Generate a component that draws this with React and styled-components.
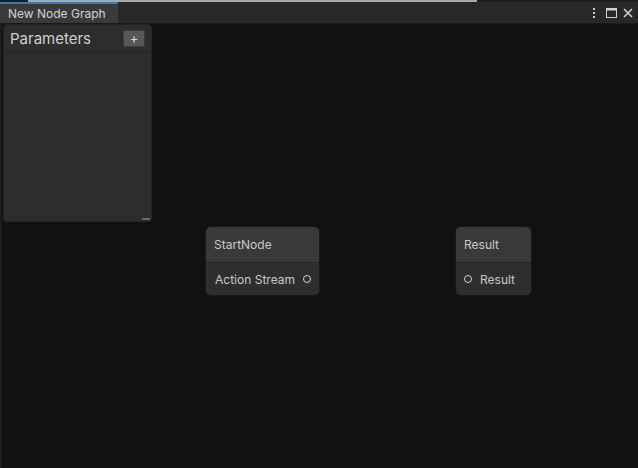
import React from "react";
import styled, { createGlobalStyle } from "styled-components";

const Global = createGlobalStyle`
  html, body { margin: 0; padding: 0; background: #111111; }
  body { font-family: Inter, "Noto Sans", "Liberation Sans", sans-serif; }
  #root { width: 638px; height: 468px; overflow: hidden; }
`;

const Window = styled.div`
  width: 638px;
  height: 468px;
  display: flex;
  flex-direction: column;
  background: #111111;
`;

const TopLine = styled.div`
  height: 2px;
  display: flex;
  background: #1c1c1c;
`;

const TopLineLight = styled.div`
  margin-left: 28px;
  width: 449px;
  background: #a9a9a9;
`;

const TabBar = styled.div`
  height: 21px;
  display: flex;
  align-items: stretch;
  justify-content: space-between;
  background: #282828;
  border-bottom: 1px solid #1a1a1a;
`;

const Tab = styled.div`
  width: 118px;
  box-sizing: border-box;
  border-top: 2px solid #3a79bb;
  background: #3a3a3a;
  color: #d2d2d2;
  font-size: 12px;
  line-height: 19px;
  padding-left: 8px;
`;

const Controls = styled.div`
  display: flex;
  align-items: center;
  gap: 6px;
  padding-right: 5px;
`;

const KebabWrap = styled.span`
  display: flex;
  margin-right: 4px;
`;

const Canvas = styled.div`
  position: relative;
  flex: 1;
  background: #111111;
  border-left: 2px solid #1d1d1d;
`;

const Panel = styled.div`
  position: absolute;
  left: 1px;
  top: 0px;
  width: 149px;
  height: 198px;
  background: #2d2d2d;
  border: 1px solid #232323;
  border-radius: 4px;
  box-sizing: border-box;
  display: flex;
  flex-direction: column;
`;

const PanelHeader = styled.div`
  height: 26px;
  display: flex;
  align-items: center;
  justify-content: space-between;
  padding: 0 6px 1px 6px;
  border-bottom: 1px solid #232323;
`;

const PanelTitle = styled.span`
  color: #cfcfcf;
  font-size: 15px;
`;

const AddButton = styled.div`
  width: 22px;
  height: 17px;
  box-sizing: border-box;
  background: #585858;
  border: 1px solid #3c3c3c;
  border-radius: 2px;
  color: #d8d8d8;
  font-size: 13px;
  line-height: 14px;
  text-align: center;
`;

const ResizeGrip = styled.div`
  position: absolute;
  right: 1px;
  bottom: 1px;
  width: 8px;
  height: 2px;
  background: #6b6b6b;
`;

const Node = styled.div`
  position: absolute;
  left: ${(p) => p.$x}px;
  top: ${(p) => p.$y}px;
  width: ${(p) => p.$w}px;
  border-radius: 5px;
  overflow: hidden;
  background: #2e2e2e;
  box-shadow: 0 0 0 1px #191919;
`;

const NodeHeader = styled.div`
  height: 36px;
  display: flex;
  align-items: center;
  padding: 0 0 1px 8px;
  box-sizing: border-box;
  background: #393939;
  border-bottom: 1px solid #262626;
  color: #c9c9c9;
  font-size: 12px;
`;

const NodeBody = styled.div`
  height: 32px;
  display: flex;
  align-items: center;
  justify-content: ${(p) => (p.$output ? "flex-end" : "flex-start")};
  gap: 8px;
  padding: 0 8px;
  color: #c9c9c9;
  font-size: 12px;
`;

const Port = styled.span`
  width: 6px;
  height: 6px;
  border: 1px solid #d0d0d0;
  border-radius: 50%;
  box-sizing: content-box;
`;

function Kebab() {
  return (
    <svg width="4" height="12" viewBox="0 0 4 12">
      <rect x="1" y="1" width="2" height="2" fill="#c8c8c8" />
      <rect x="1" y="5" width="2" height="2" fill="#c8c8c8" />
      <rect x="1" y="9" width="2" height="2" fill="#c8c8c8" />
    </svg>
  );
}

function Maximize() {
  return (
    <svg width="11" height="10" viewBox="0 0 11 10">
      <rect x="0.5" y="0.5" width="10" height="9" fill="none" stroke="#d0d0d0" />
      <rect x="0.5" y="0.5" width="10" height="2" fill="#d0d0d0" />
    </svg>
  );
}

function Close() {
  return (
    <svg width="10" height="10" viewBox="0 0 10 10">
      <path d="M1 1 L9 9 M9 1 L1 9" stroke="#d0d0d0" strokeWidth="1.6" />
    </svg>
  );
}

export default function App() {
  return (
    <>
      <Global />
      <Window>
        <TopLine>
          <TopLineLight />
        </TopLine>
        <TabBar>
          <Tab>New Node Graph</Tab>
          <Controls>
            <KebabWrap>
              <Kebab />
            </KebabWrap>
            <Maximize />
            <Close />
          </Controls>
        </TabBar>
        <Canvas>
          <Panel>
            <PanelHeader>
              <PanelTitle>Parameters</PanelTitle>
              <AddButton>+</AddButton>
            </PanelHeader>
            <ResizeGrip />
          </Panel>
          <Node $x={204} $y={203} $w={113}>
            <NodeHeader>StartNode</NodeHeader>
            <NodeBody $output>
              <span>Action Stream</span>
              <Port />
            </NodeBody>
          </Node>
          <Node $x={454} $y={203} $w={75}>
            <NodeHeader>Result</NodeHeader>
            <NodeBody>
              <Port />
              <span>Result</span>
            </NodeBody>
          </Node>
        </Canvas>
      </Window>
    </>
  );
}
